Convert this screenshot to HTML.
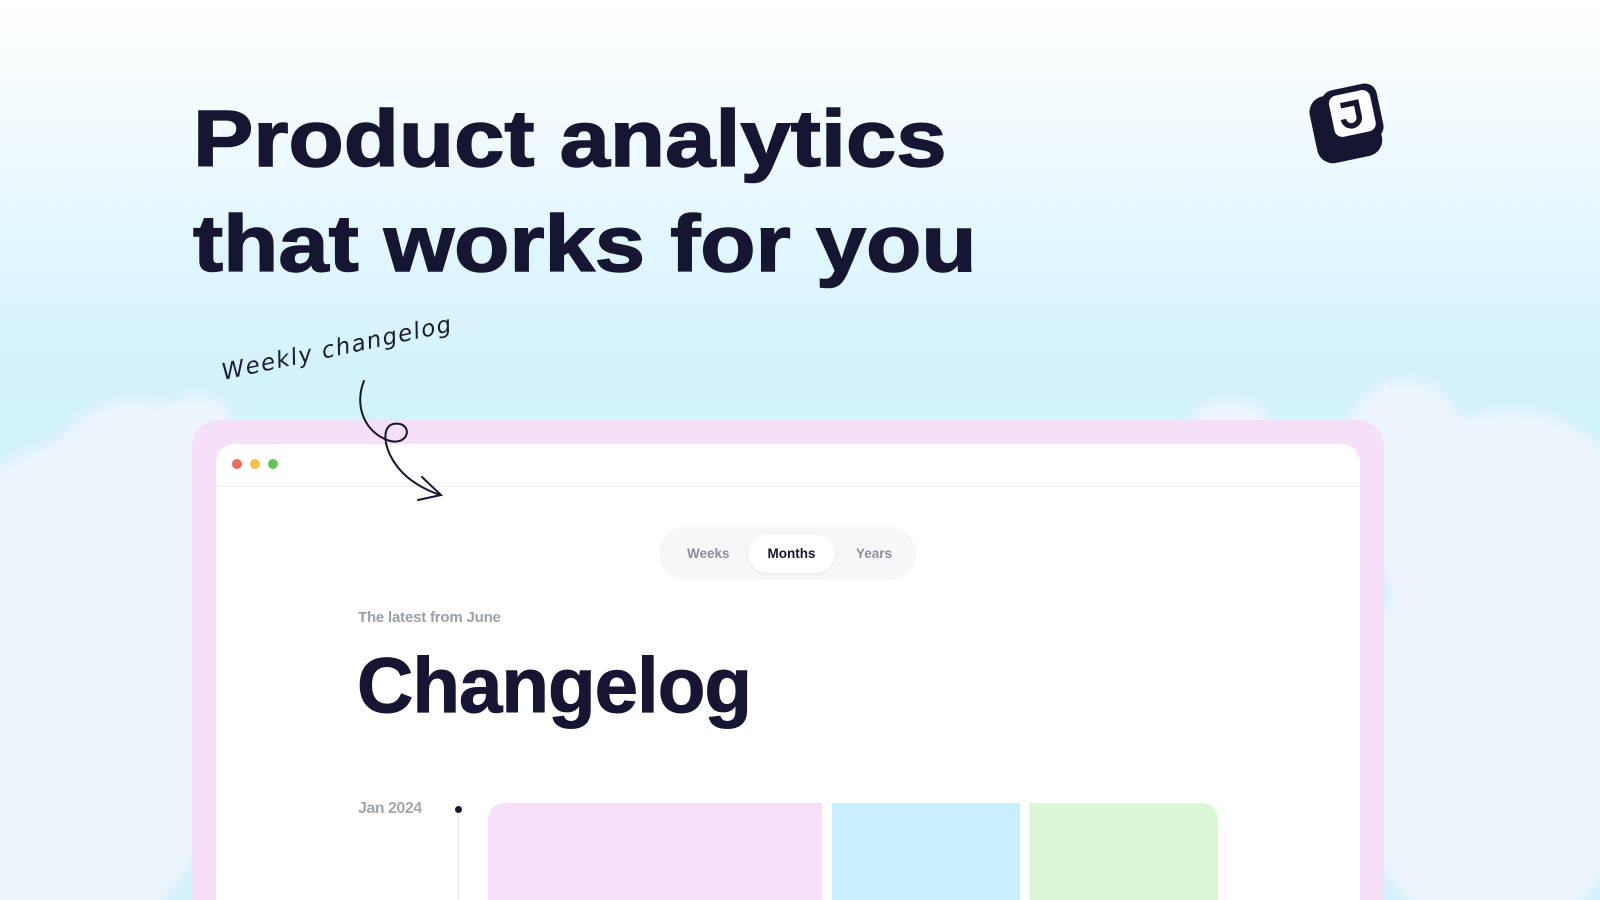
<!DOCTYPE html>
<html><head><style>
html,body{margin:0;width:1600px;height:900px;overflow:hidden}
body{position:relative;background:linear-gradient(180deg,#ffffff 0px,#f2fbfe 120px,#dff6fd 260px,#d2f2fc 400px,#d2f2fc 900px);font-family:"Liberation Sans",sans-serif}
.cloud{position:absolute;border-radius:50%;background:#eef4fb;filter:blur(6px)}
h1{position:absolute;left:193px;top:86px;margin:0;font-size:80px;line-height:105px;font-weight:bold;color:#161633;letter-spacing:0px;word-spacing:0px;white-space:nowrap;-webkit-text-stroke:1.5px #161633;transform:scaleX(1.13);transform-origin:left}
.hand{position:absolute;left:222px;top:360px;font-family:"DejaVu Sans",sans-serif;font-style:italic;font-size:23px;color:#1c1c3a;transform:rotate(-12deg);transform-origin:left;font-weight:300;letter-spacing:1.5px}
.frame{position:absolute;left:192px;top:420px;width:1192px;height:520px;background:#f5e0f8;border-radius:26px}
.win{position:absolute;left:216px;top:444px;width:1144px;height:500px;background:#fff;border-radius:18px}
.bar{height:42px;border-bottom:1px solid #ebebef;position:relative}
.dot{position:absolute;top:15px;width:10px;height:10px;border-radius:50%}
.tabs{position:absolute;left:443px;top:83px;width:257px;height:53px;background:#f6f7f9;border-radius:27px}
.tab{position:absolute;top:0;line-height:53px;font-size:13.5px;font-weight:bold;color:#8a8f99}
.pill{position:absolute;left:89px;top:7px;width:87px;height:39px;background:#fff;border-radius:20px;box-shadow:0 1px 3px rgba(0,0,0,.08);line-height:39px;text-align:center;font-size:13.5px;font-weight:bold;color:#161633}
.sub{position:absolute;left:142px;top:165px;font-size:15px;color:#9aa0a8;font-weight:bold;letter-spacing:-.2px}
.big{position:absolute;left:141px;top:196px;font-size:78px;font-weight:bold;color:#161633;letter-spacing:-1px;-webkit-text-stroke:1px #161633}
.jan{position:absolute;left:142px;top:356px;font-size:16px;color:#a2a7ae;letter-spacing:-.5px;font-weight:bold}
</style></head><body>
<div class="cloud" style="left:-60px;top:440px;width:300px;height:260px"></div>
<div class="cloud" style="left:40px;top:400px;width:190px;height:200px"></div>
<div class="cloud" style="left:-80px;top:560px;width:300px;height:380px"></div>
<div class="cloud" style="left:150px;top:395px;width:90px;height:90px"></div>
<div class="cloud" style="left:1340px;top:380px;width:130px;height:150px"></div>
<div class="cloud" style="left:1380px;top:410px;width:260px;height:260px"></div>
<div class="cloud" style="left:1350px;top:540px;width:290px;height:400px"></div>
<div class="cloud" style="left:1190px;top:400px;width:80px;height:40px"></div>
<h1>Product analytics<br>that works for you</h1>
<svg style="position:absolute;left:1300px;top:76px" width="92" height="92" viewBox="0 0 92 92">
<g transform="rotate(-12 46 46)">
<rect x="12" y="16" width="66" height="68" rx="16" fill="#161633"/>
<rect x="26" y="12" width="56" height="56" rx="12" fill="#161633"/>
<rect x="33" y="18" width="42" height="42" rx="8" fill="#fff"/>
<path d="M44 29h16v14a8 8 0 0 1-16 0" fill="none" stroke="#161633" stroke-width="5.5"/>
</g></svg>
<div class="hand">Weekly changelog</div>
<div class="frame"></div>
<div class="win">
<div class="bar"><div class="dot" style="left:16px;background:#ee6a5f"></div><div class="dot" style="left:34px;background:#f5be4f"></div><div class="dot" style="left:52px;background:#62c554"></div></div>
<div class="tabs"><span class="tab" style="left:28px">Weeks</span><div class="pill">Months</div><span class="tab" style="left:197px">Years</span></div>
<div class="sub">The latest from June</div>
<div class="big">Changelog</div>
<div class="jan">Jan 2024</div>
<div style="position:absolute;left:239px;top:362px;width:7px;height:7px;border-radius:50%;background:#161633"></div>
<div style="position:absolute;left:242px;top:372px;width:1px;height:140px;background:#e3e5e8"></div>
<div style="position:absolute;left:272px;top:359px;width:334px;height:200px;background:#f6e1f9;border-radius:16px 0 0 0"></div>
<div style="position:absolute;left:616px;top:359px;width:188px;height:200px;background:#c9eefd"></div>
<div style="position:absolute;left:813px;top:359px;width:189px;height:200px;background:#daf7d6;border-radius:0 16px 0 0"></div>
</div>
<svg style="position:absolute;left:350px;top:375px" width="100" height="130" viewBox="0 0 100 130">
<path d="M14 6C4 30 14 58 40 66C58 70 62 52 50 49C34 46 32 62 40 80C48 96 62 110 90 120" fill="none" stroke="#161633" stroke-width="2" stroke-linecap="round"/>
<path d="M72 102L91 120L68 125" fill="none" stroke="#161633" stroke-width="2" stroke-linecap="round"/>
</svg>
</body></html>
